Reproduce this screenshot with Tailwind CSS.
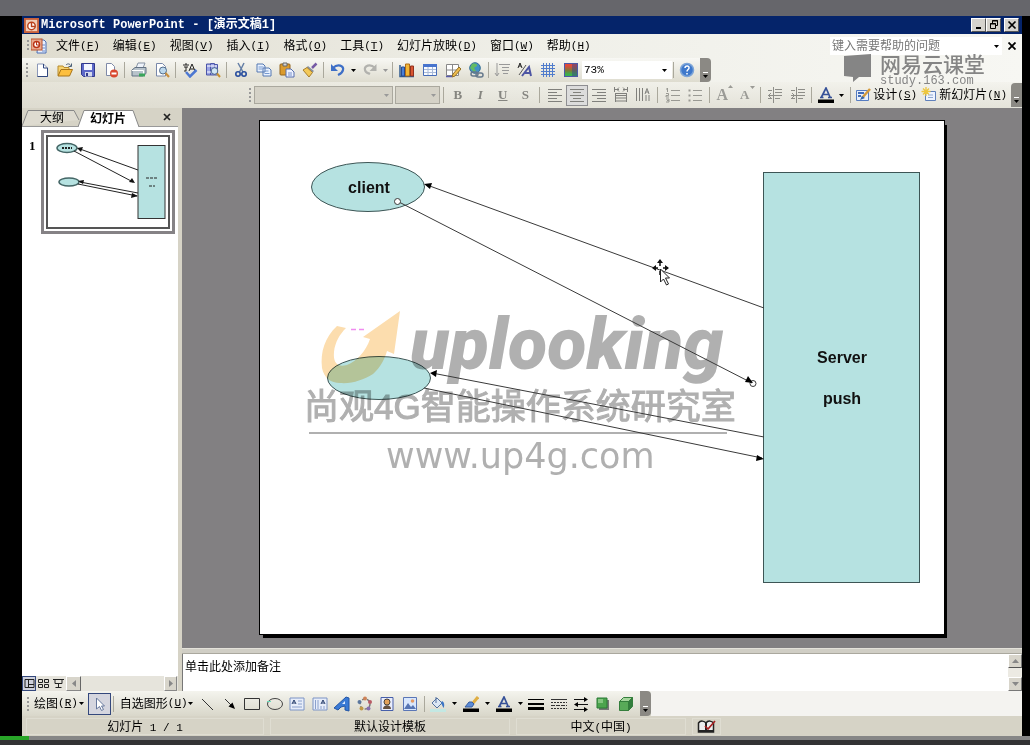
<!DOCTYPE html>
<html lang="zh-CN">
<head>
<meta charset="utf-8">
<title>Microsoft PowerPoint - [演示文稿1]</title>
<script src="https://cdn.jsdelivr.net/npm/@tailwindcss/browser@4"></script>
</head>
<body class="bg-black font-['Liberation_Sans','Noto_Sans_CJK_SC',sans-serif] text-xs text-black">
<div class="flex min-h-screen flex-col">
  <div class="h-4 bg-[#66666b]"></div>

  <main class="ml-[22px] mr-2 flex flex-1 flex-col bg-[#d6d3c6]">
    <!-- Title bar -->
    <header class="flex h-[18px] items-center bg-[#05246a] pl-[2px] pr-[3px] text-white">
      <svg class="size-[15px]" viewBox="0 0 16 16"><rect width="16" height="16" fill="#f0cdb8"/><rect x="1" y="1" width="14" height="14" fill="none" stroke="#c8623c" stroke-width="2"/><circle cx="8" cy="8.500" r="4" fill="#fff" stroke="#b9411c" stroke-width="1.500"/><path d="M8 5v4h4" fill="none" stroke="#b9411c" stroke-width="1.500"/></svg>
      <h1 class="ml-[2px] flex-1 whitespace-pre font-['Liberation_Mono','Noto_Sans_CJK_SC',monospace] text-[12px] font-bold leading-4">Microsoft PowerPoint - [演示文稿1]</h1>
      <div class="flex">
        <button aria-label="最小化" class="grid h-[14px] w-[15px] place-items-center border border-t-white border-l-white border-r-[#555] border-b-[#555] bg-[#d6d3ce]"><svg class="size-[10px]" viewBox="0 0 10 10"><path d="M2 8h5" stroke="#000" stroke-width="2"/></svg></button>
        <button aria-label="还原" class="grid h-[14px] w-[15px] place-items-center border border-t-white border-l-white border-r-[#555] border-b-[#555] bg-[#d6d3ce]"><svg class="size-[10px]" viewBox="0 0 10 10" fill="none" stroke="#000"><path d="M3.500 3V.500h5v5H6.500M3 1h6M1.500 3.500h5v5h-5zM1 4h6"/></svg></button>
        <button aria-label="关闭" class="ml-[3px] grid h-[14px] w-[15px] place-items-center border border-t-white border-l-white border-r-[#555] border-b-[#555] bg-[#d6d3ce]"><svg class="size-[10px]" viewBox="0 0 10 10"><path d="M1.500 1.500l7 7M8.500 1.500l-7 7" stroke="#000" stroke-width="1.700"/></svg></button>
      </div>
    </header>

    <div class="relative bg-linear-to-r from-[#dfdccf] via-[#efefe8] to-[#f7f7f3]">
      <!-- Menu bar -->
      <nav class="flex h-6 items-center pl-[5px] pr-1">
        <svg class="h-3 w-[2px]" viewBox="0 0 2 12"><path d="M1 0v12" stroke="#999" stroke-width="2" stroke-dasharray="2 2"/></svg>
        <svg class="ml-[2px] size-4" viewBox="0 0 16 16"><path d="M7 2h6l2 2v11H6z" fill="#e8f0ff" stroke="#4a6fb5"/><path d="M11 7h3M11 10h3M11 13h3" stroke="#6a8ccc"/><rect y="1" width="11" height="11" fill="#e9a88c" stroke="#b8502c"/><circle cx="5.500" cy="6.500" r="3" fill="#fff" stroke="#ba3415" stroke-width="1.500"/><path d="M5.500 4v3h3" stroke="#ba3415" fill="none"/></svg>
        <div class="ml-[9px] flex flex-1 gap-[13px] leading-5">
          <button class="flex items-center">文件<span class="font-['Liberation_Mono',monospace] text-[11px]">(<u>F</u>)</span></button>
          <button class="flex items-center">编辑<span class="font-['Liberation_Mono',monospace] text-[11px]">(<u>E</u>)</span></button>
          <button class="flex items-center">视图<span class="font-['Liberation_Mono',monospace] text-[11px]">(<u>V</u>)</span></button>
          <button class="flex items-center">插入<span class="font-['Liberation_Mono',monospace] text-[11px]">(<u>I</u>)</span></button>
          <button class="flex items-center">格式<span class="font-['Liberation_Mono',monospace] text-[11px]">(<u>O</u>)</span></button>
          <button class="flex items-center">工具<span class="font-['Liberation_Mono',monospace] text-[11px]">(<u>T</u>)</span></button>
          <button class="flex items-center">幻灯片放映<span class="font-['Liberation_Mono',monospace] text-[11px]">(<u>D</u>)</span></button>
          <button class="flex items-center">窗口<span class="font-['Liberation_Mono',monospace] text-[11px]">(<u>W</u>)</span></button>
          <button class="flex items-center">帮助<span class="font-['Liberation_Mono',monospace] text-[11px]">(<u>H</u>)</span></button>
        </div>
        <input type="text" aria-label="键入需要帮助的问题" placeholder="键入需要帮助的问题" class="h-[18px] w-[160px] bg-white pl-[2px] text-xs placeholder:text-[#777]">
        <button aria-label="帮助列表" class="grid h-[18px] w-3 place-items-center bg-white"><svg class="h-[3px] w-[5px]" viewBox="0 0 5 3"><path d="M0 0h5L2.500 3z"/></svg></button>
        <button aria-label="关闭文档" class="ml-1 grid w-3 place-items-center"><svg class="size-2" viewBox="0 0 8 8"><path d="M.500.500l7 7M7.500.500l-7 7" stroke="#000" stroke-width="1.800"/></svg></button>
      </nav>

      <!-- Standard toolbar -->
      <div class="flex h-6 items-center">
        <div class="flex h-6 items-center rounded-r bg-linear-to-b from-[#f8f8f4] to-[#dedccf] pl-1">
          <svg class="mr-[2px] h-[14px] w-[2px]" viewBox="0 0 2 14"><path d="M1 0v14" stroke="#999" stroke-width="2" stroke-dasharray="2 2"/></svg>
          <button aria-label="新建" class="grid h-[22px] w-[23px] place-items-center"><svg class="size-4" viewBox="0 0 16 16"><path d="M3.500 2h6l4 4v8.500h-10z" fill="#fff" stroke="#8a97b8"/><path d="M9.500 2v4h4v8.500h-10" fill="none" stroke="#30477e"/></svg></button>
          <button aria-label="打开" class="grid h-[22px] w-[23px] place-items-center"><svg class="size-4" viewBox="0 0 16 16"><path d="M1 13.500V4h5l1 1.500h5v2" fill="#f8d36e" stroke="#b58a2c"/><path d="M1 14l3-6.500h11.500L12.500 14z" fill="#fcbf3f" stroke="#a87419"/><path d="M9 3c2-2 4-1 5 1M14.500 1.500V4.500h-3" fill="none" stroke="#4b6078"/></svg></button>
          <button aria-label="保存" class="grid h-[22px] w-[23px] place-items-center"><svg class="size-4" viewBox="0 0 16 16"><path d="M1.500 1.500h13v13h-11l-2-2z" fill="#5d68c8" stroke="#31398c"/><path d="M4 2h8v6H4z" fill="#f2f5ff"/><path d="M5 10h7v4.500H5z" fill="#d4d9ec"/><path d="M6 11h2v3H6z" fill="#31398c"/></svg></button>
          <button aria-label="权限" class="grid h-[22px] w-[23px] place-items-center"><svg class="size-4" viewBox="0 0 16 16"><path d="M3.500 1.500h5l3 3v9h-8z" fill="#fff" stroke="#7f8aa8"/><circle cx="11" cy="11.500" r="4" fill="#d9482f"/><path d="M8.500 11.500h5" stroke="#fff" stroke-width="2"/></svg></button>
          <span class="mx-[2px] h-4 w-px bg-[#aaa89c]"></span>
          <button aria-label="打印" class="grid h-[22px] w-[23px] place-items-center"><svg class="size-4" viewBox="0 0 16 16"><path d="M5 6l2-5h7l-2 5" fill="#eef3fa" stroke="#8793a3"/><path d="M1 8l3-2.500h11v6L12 14H1z" fill="#b8c3cb" stroke="#637284"/><path d="M1 8.500h11.500V14" fill="none" stroke="#fff"/><path d="M8 11.500h6v3H8z" fill="#3aa55a"/></svg></button>
          <button aria-label="打印预览" class="grid h-[22px] w-[23px] place-items-center"><svg class="size-4" viewBox="0 0 16 16"><path d="M2.500 1.500h6l3 3v9.500h-9z" fill="#fff" stroke="#7888aa"/><circle cx="9" cy="8.500" r="3.500" fill="#bcd8ed" stroke="#526d8c"/><path d="M11.500 11l3.500 4" stroke="#c98f3c" stroke-width="2"/></svg></button>
          <span class="mx-[2px] h-4 w-px bg-[#aaa89c]"></span>
          <button aria-label="拼写检查" class="grid h-[22px] w-[23px] place-items-center"><svg class="size-4" viewBox="0 0 16 16"><path d="M1 3h6M4 1v2M2 5h4M4 5v4H2M7 9l3-7 3 7M8 7h4" stroke="#222" fill="none"/><path d="M4 10l4 4.500L14.500 8" fill="none" stroke="#4d78d2" stroke-width="2.500"/></svg></button>
          <button aria-label="信息检索" class="grid h-[22px] w-[23px] place-items-center"><svg class="size-4" viewBox="0 0 16 16"><path d="M1.500 2h4v11h-4zM5.500 1.500h4V13h-4zM9.500 2.500h3V13h-3z" fill="#9aa3e5" stroke="#4d56a8"/><path d="M2 4h10M2 10h10" stroke="#fff"/><circle cx="9.500" cy="9" r="3.300" fill="#d2e7f4" stroke="#516b92"/><path d="M12 11.500l3 3.500" stroke="#c9912f" stroke-width="2"/></svg></button>
          <span class="mx-[2px] h-4 w-px bg-[#aaa89c]"></span>
          <button aria-label="剪切" class="grid h-[22px] w-[23px] place-items-center"><svg class="size-4" viewBox="0 0 16 16"><path d="M5 1l5 9M11 1L6.500 10" stroke="#657fa6" stroke-width="1.500"/><circle cx="5" cy="12" r="2.200" fill="none" stroke="#274d9e" stroke-width="1.600"/><circle cx="11" cy="12" r="2.200" fill="none" stroke="#274d9e" stroke-width="1.600"/></svg></button>
          <button aria-label="复制" class="grid h-[22px] w-[23px] place-items-center"><svg class="size-4" viewBox="0 0 16 16"><path d="M1 2h6l2 2v6H1zM7 6h6l2 2v6H7z" fill="#e9f2ff" stroke="#5478b2"/><path d="M2.500 5h5M2.500 7h4M8.500 9h4M8.500 11.500h5" stroke="#789bd0"/></svg></button>
          <button aria-label="粘贴" class="grid h-[22px] w-[23px] place-items-center"><svg class="size-4" viewBox="0 0 16 16"><rect x="1" y="2" width="10" height="11" rx="1" fill="#db9b2d" stroke="#94651c"/><path d="M4 1h4v3H4z" fill="#d6d6d6" stroke="#676767"/><path d="M7 7h5l3 3v5H7z" fill="#edf2ff" stroke="#576fae"/><path d="M9 11h4M9 13h4" stroke="#7790ca"/></svg></button>
          <button aria-label="格式刷" class="grid h-[22px] w-[23px] place-items-center"><svg class="size-4" viewBox="0 0 16 16"><path d="M14.500 1.500L10 6" stroke="#765aa5" stroke-width="2.500"/><path d="M6 4l6 5-1.500 1.500-6-5z" fill="#8791a0"/><path d="M1 8l4-2.500 5.500 5L7 15z" fill="#f3c958" stroke="#a77e2c"/></svg></button>
          <span class="mx-[2px] h-4 w-px bg-[#aaa89c]"></span>
          <button aria-label="撤消" class="grid h-[22px] w-[23px] place-items-center"><svg class="size-4" viewBox="0 0 16 16"><path d="M3 6c5-5 11-2 10 2-.500 3-3 4-5 5" fill="none" stroke="#3e6fc7" stroke-width="2.200"/><path d="M1 2v7h7z" fill="#3e6fc7"/></svg></button>
          <button aria-label="撤消列表" class="grid w-[9px] place-items-center"><svg class="h-[3px] w-[5px]" viewBox="0 0 5 3"><path d="M0 0h5L2.500 3z"/></svg></button>
          <button aria-label="恢复" class="grid h-[22px] w-[23px] place-items-center"><svg class="size-4" viewBox="0 0 16 16"><path d="M13 6C8 1 2 4 3 8c.500 3 3 3 5 4" fill="none" stroke="#b2b2ae" stroke-width="2.200"/><path d="M14.500 2v7h-7z" fill="#b2b2ae"/></svg></button>
          <button aria-label="恢复列表" class="grid w-[9px] place-items-center"><svg class="h-[3px] w-[5px]" viewBox="0 0 5 3"><path d="M0 0h5L2.500 3z" fill="#999"/></svg></button>
          <span class="mx-[2px] h-4 w-px bg-[#aaa89c]"></span>
          <button aria-label="插入图表" class="grid h-[22px] w-[23px] place-items-center"><svg class="size-4" viewBox="0 0 16 16"><path d="M1 3v11.500h14" stroke="#315b8f" fill="none" stroke-width="1.500"/><path d="M2.500 5h3v9h-3z" fill="#4a80d5" stroke="#264c94"/><path d="M6.500 2h4v12h-4z" fill="#f2b736" stroke="#b06c16"/><path d="M11.500 4h3v10h-3z" fill="#d95532" stroke="#91321e"/></svg></button>
          <button aria-label="插入表格" class="grid h-[22px] w-[23px] place-items-center"><svg class="size-4" viewBox="0 0 16 16"><path d="M1.500 2.500h13v11h-13z" fill="#f8fbff" stroke="#476db8"/><path d="M1 3.500h14" stroke="#4774cd" stroke-width="3"/><path d="M2 7.500h12M2 10.500h12M6 5v8M10.500 5v8" stroke="#a8bad9"/></svg></button>
          <button aria-label="表格和边框" class="grid h-[22px] w-[23px] place-items-center"><svg class="size-4" viewBox="0 0 16 16"><path d="M1.500 2.500h12v11h-12zM2 8h11M7.500 3v10" fill="#fff" stroke="#888"/><path d="M14 5l-6 7-1 3 3-1 6-7z" fill="#eebc4f" stroke="#927025"/><path d="M1 14.500h6" stroke="#585ba8" stroke-width="1.500"/></svg></button>
          <button aria-label="插入超链接" class="grid h-[22px] w-[23px] place-items-center"><svg class="size-4" viewBox="0 0 16 16"><circle cx="7" cy="6" r="5.300" fill="#4190c7" stroke="#326d94"/><path d="M4 2c3-1 6 0 5 2L6 6l2 3-2 1-4-4z" fill="#62bb62"/><rect x="3" y="10" width="7" height="4" rx="2" fill="none" stroke="#66798c" stroke-width="1.500"/><rect x="8" y="11" width="7" height="4" rx="2" fill="none" stroke="#66798c" stroke-width="1.500"/></svg></button>
          <span class="mx-px h-4 w-px bg-[#aaa89c]"></span>
          <button aria-label="全部展开" class="grid h-[22px] w-[23px] place-items-center"><svg class="size-4" viewBox="0 0 16 16" stroke="#999" fill="none"><path d="M3 1v12M1 11l2 3 2-3M5 2.500h11M8 5.500h7M8 8.500h7M9 11.500h5"/></svg></button>
          <button aria-label="显示格式" class="grid h-[22px] w-[23px] place-items-center"><svg class="size-4" viewBox="0 0 16 16" fill="none"><path d="M1 6l2-5 2 5M2 4h2" stroke="#222"/><path d="M2 13L9 3" stroke="#555"/><path d="M5 14l7-9 2 9M8 11h5.500" stroke="#4d55a3" stroke-width="2"/></svg></button>
          <button aria-label="显示网格" class="grid h-[22px] w-[23px] place-items-center"><svg class="size-4" viewBox="0 0 16 16"><path d="M3.500 1v14M6.500 1v14M9.500 1v14M12.500 1v14M1 3.500h14M1 6.500h14M1 9.500h14M1 12.500h14" stroke="#507ccc"/></svg></button>
          <button aria-label="颜色/灰度" class="grid h-[22px] w-[23px] place-items-center"><svg class="size-4" viewBox="0 0 16 16"><defs><linearGradient id="hue" x2="0" y2="1"><stop offset=".15" stop-color="#e04a3a"/><stop offset=".55" stop-color="#7c7a3a"/><stop offset=".85" stop-color="#3cb04c"/></linearGradient></defs><path d="M1 1h14v14H1z" fill="#4d58a8"/><path d="M2 2h12v12H2z" fill="url(#hue)"/><path d="M9 2h5v12H9z" fill="#38468c" fill-opacity=".5"/></svg></button>
          <div class="relative flex h-[18px] w-[90px] items-center bg-white">
            <select aria-label="显示比例" class="h-[18px] w-full appearance-none bg-transparent pl-[2px] font-['Liberation_Mono',monospace] text-[11px]"><option>73%</option></select>
            <svg class="pointer-events-none absolute right-[5px] h-[3px] w-[5px]" viewBox="0 0 5 3"><path d="M0 0h5L2.500 3z"/></svg>
          </div>
          <span class="mx-px h-4 w-px bg-[#aaa89c]"></span>
          <button aria-label="帮助" class="grid h-[22px] w-[23px] place-items-center"><svg class="size-4" viewBox="0 0 16 16"><circle cx="8" cy="8" r="6.500" fill="#3e78cb" stroke="#7da5d8" stroke-width="1.500"/><path d="M6 6c0-3 4.500-2.500 4 0 0 1.500-2 1.500-2 3.500M8 11v1.500" fill="none" stroke="#fff" stroke-width="1.500"/></svg></button>
          <button aria-label="工具栏选项" class="ml-[2px] flex h-6 w-[11px] items-end justify-center rounded-r bg-[#8b8984] pb-1"><svg class="h-[6px] w-[5px]" viewBox="0 0 5 6"><path d="M0 .500h5" stroke="#fff"/><path d="M0 3h5L2.500 6z"/></svg></button>
        </div>
      </div>

      <!-- Formatting toolbar -->
      <div class="flex h-[26px] items-center justify-end bg-linear-to-b from-[#efeee6]/40 to-[#dddbd0]/70">
        <svg class="mr-[3px] h-[14px] w-[2px]" viewBox="0 0 2 14"><path d="M1 0v14" stroke="#999" stroke-width="2" stroke-dasharray="2 2"/></svg>
        <div class="relative flex h-[18px] w-[139px] items-center border border-[#aaa89e] bg-[#d5d2c7]"><select aria-label="字体" disabled class="h-4 w-full appearance-none"><option></option></select><svg class="absolute right-[3px] h-[3px] w-[5px]" viewBox="0 0 5 3"><path d="M0 0h5L2.500 3z" fill="#999"/></svg></div>
        <div class="relative ml-[2px] mr-[3px] flex h-[18px] w-[45px] items-center border border-[#aaa89e] bg-[#d5d2c7]"><select aria-label="字号" disabled class="h-4 w-full appearance-none"><option></option></select><svg class="absolute right-[3px] h-[3px] w-[5px]" viewBox="0 0 5 3"><path d="M0 0h5L2.500 3z" fill="#999"/></svg></div>
        <span class="mr-[2px] h-4 w-px bg-[#aaa89c]"></span>
        <div class="flex font-['Liberation_Serif',serif] text-[13px] text-[#858580]">
          <button aria-label="加粗" class="w-[23px] font-bold">B</button>
          <button aria-label="倾斜" class="w-[22px] font-bold italic">I</button>
          <button aria-label="下划线" class="w-[23px] font-bold underline">U</button>
          <button aria-label="阴影" class="w-[22px] font-bold">S</button>
        </div>
        <span class="mx-[3px] h-4 w-px bg-[#aaa89c]"></span>
        <div class="flex text-[#80807c]">
          <button aria-label="左对齐" class="grid h-[21px] w-[23px] place-items-center"><svg class="size-4" viewBox="0 0 16 16" stroke="currentColor"><path d="M1 2.500h14M1 5.500h9M1 8.500h14M1 11.500h9M1 14.500h14"/></svg></button>
          <button aria-label="居中" aria-pressed="true" class="grid h-[21px] w-[22px] place-items-center border border-[#8e8e91] bg-[#dcdcdc]"><svg class="size-4" viewBox="0 0 16 16" stroke="currentColor"><path d="M1 2.500h14M4 5.500h8M1 8.500h14M4 11.500h8M1 14.500h14"/></svg></button>
          <button aria-label="右对齐" class="grid h-[21px] w-[22px] place-items-center"><svg class="size-4" viewBox="0 0 16 16" stroke="currentColor"><path d="M1 2.500h14M6 5.500h9M1 8.500h14M6 11.500h9M1 14.500h14"/></svg></button>
          <button aria-label="分散对齐" class="grid h-[21px] w-[22px] place-items-center"><svg class="size-4" viewBox="0 0 16 16" stroke="currentColor" fill="none"><path d="M1.500 0v5M14.500 0v5M2 2.500h4M10 2.500h4M6 .500L4 2.500l2 2M10 .500l2 2-2 2M2 6.500h12M2 8.500h12M2 11h12M2 14h12M2.500 6v9M13.500 6v9"/></svg></button>
          <button aria-label="更改文字方向" class="grid h-[21px] w-[22px] place-items-center"><svg class="size-4" viewBox="0 0 16 16" stroke="currentColor" fill="none"><path d="M1.500 1v13M4.500 1v13M7.500 1v13M10 7l2-5.500L14 7M10.500 5h3M11 8v6M14 8v6"/></svg></button>
        </div>
        <span class="mx-[3px] h-4 w-px bg-[#aaa89c]"></span>
        <div class="flex text-[#999993]">
          <button aria-label="编号" class="grid h-[21px] w-[23px] place-items-center"><svg class="size-4" viewBox="0 0 16 16" stroke="currentColor" fill="none"><path d="M6 3.500h9M6 8.500h9M6 13.500h9M2.500 1v4M1 2h1.500M1 6.500h2.500v2H1v1.500h3M1 12h3v3H1M2 13.500h2"/></svg></button>
          <button aria-label="项目符号" class="grid h-[21px] w-[22px] place-items-center"><svg class="size-4" viewBox="0 0 16 16" stroke="currentColor"><path d="M6 3.500h9M6 8.500h9M6 13.500h9"/><path d="M1.500 3.500h2M1.500 8.500h2M1.500 13.500h2" stroke-width="2"/></svg></button>
        </div>
        <span class="mx-[3px] h-4 w-px bg-[#aaa89c]"></span>
        <div class="flex font-['Liberation_Serif',serif] font-bold text-[#9b9b96]">
          <button aria-label="增大字号" class="flex w-[23px] justify-center text-base leading-6">A<svg class="mt-[2px] h-[3px] w-[5px]" viewBox="0 0 5 3" fill="currentColor"><path d="M0 3h5L2.500 0z"/></svg></button>
          <button aria-label="减小字号" class="flex w-[22px] justify-center text-[13px] leading-6">A<svg class="mt-[3px] h-[3px] w-[5px]" viewBox="0 0 5 3" fill="currentColor"><path d="M0 0h5L2.500 3z"/></svg></button>
        </div>
        <span class="mx-[2px] h-4 w-px bg-[#aaa89c]"></span>
        <div class="flex text-[#8d8d88]">
          <button aria-label="减少缩进量" class="grid h-[21px] w-[23px] place-items-center"><svg class="size-4" viewBox="0 0 16 16" stroke="currentColor" fill="none"><path d="M1 3.500h4M8 2.500h7M8 5.500h7M1 8.500h14M8 11.500h5M1 11.500h4M6.500 0v16M4 6L1.500 8.500 4 11"/></svg></button>
          <button aria-label="增加缩进量" class="grid h-[21px] w-[23px] place-items-center"><svg class="size-4" viewBox="0 0 16 16" stroke="currentColor" fill="none"><path d="M1 3.500h4M8 2.500h7M8 5.500h7M1 8.500h14M8 11.500h5M1 11.500h4M6.500 0v16M2 6l2.500 2.500L2 11"/></svg></button>
        </div>
        <span class="mx-[2px] h-4 w-px bg-[#aaa89c]"></span>
        <button aria-label="字体颜色" class="grid h-[21px] w-[23px] place-items-center"><svg class="size-4" viewBox="0 0 16 16"><path d="M3.500 10L8 1l4 9M5.500 7.500h5.500M2 10.500h3.500M10 10.500h4" fill="none" stroke="#365198" stroke-width="1.700"/><path d="M0 12.500h16v3.500H0z"/></svg></button>
        <button aria-label="字体颜色列表" class="grid w-[9px] place-items-center"><svg class="h-[3px] w-[5px]" viewBox="0 0 5 3"><path d="M0 0h5L2.500 3z"/></svg></button>
        <span class="mx-[4px] h-4 w-px bg-[#aaa89c]"></span>
        <button class="flex items-center gap-[2px]"><svg class="size-4" viewBox="0 0 16 16"><path d="M1.500 3.500h12v10h-12z" fill="#e8f0fb" stroke="#567cc1"/><path d="M3 6h6M3 9h3" stroke="#456eb8" stroke-width="2"/><path d="M15 2L7 11" stroke="#d59a39" stroke-width="2.500"/><path d="M5 13l2-4 3 2z" fill="#3265aa"/></svg><span class="flex items-center">设计<span class="font-['Liberation_Mono',monospace] text-[11px]">(<u>S</u>)</span></span></button>
        <button class="ml-1 flex items-center gap-[2px]"><svg class="size-4" viewBox="0 0 16 16"><path d="M4.500 4.500h10v9h-10z" fill="#edf3ff" stroke="#6081bb"/><path d="M7 8h5M7 10.500h5" stroke="#90a9d1"/><path d="M5 0v9M.500 4.500h9M2 1.500l6 6M8 1.500l-6 6" stroke="#edc63f" stroke-width="1.300"/></svg><span class="flex items-center">新幻灯片<span class="font-['Liberation_Mono',monospace] text-[11px]">(<u>N</u>)</span></span></button>
        <button aria-label="工具栏选项" class="ml-1 flex h-6 w-[11px] items-end justify-center rounded-tl bg-[#8b8984] pb-1"><svg class="h-[6px] w-[5px]" viewBox="0 0 5 6"><path d="M0 .500h5" stroke="#fff"/><path d="M0 3h5L2.500 6z"/></svg></button>
      </div>

      <!-- Course site watermark -->
      <div class="absolute right-[37px] top-[18px] flex gap-2 text-[#858585]">
        <svg class="mt-[2px] h-[30px] w-7" viewBox="0 0 28 30"><path d="M0 2L27 0v23H15l-6 5v-5L0 22z" fill="#858585"/></svg>
        <div class="flex flex-col">
          <span class="text-[21px] font-medium leading-[26px]">网易云课堂</span>
          <span class="font-['Liberation_Mono',monospace] text-[12px] leading-[6px]">study.163.com</span>
        </div>
      </div>
    </div>

    <!-- Work area -->
    <div class="flex flex-1">
      <aside class="flex w-[156px] flex-col">
        <div class="flex h-[19px] items-end border-b border-[#999]">
          <button class="relative h-4 w-[56px] leading-[14px]"><svg class="absolute inset-0 h-4 w-[58px]" viewBox="0 0 58 16"><path d="M0 16L6 .500h46L57 10" fill="#dedbd0" stroke="#888"/></svg><span class="relative pl-1">大纲</span></button>
          <button class="relative -mb-px h-[17px] w-[60px] font-bold leading-[14px]"><svg class="absolute inset-0 h-[17px] w-[62px]" viewBox="0 0 62 17"><path d="M0 17L6 .500h49L61 17" fill="#fff" stroke="#888"/></svg><span class="relative">幻灯片</span></button>
          <button aria-label="关闭窗格" class="mb-[5px] ml-auto mr-[7px]"><svg class="size-2" viewBox="0 0 8 8"><path d="M1 1l6 6M7 1L1 7" stroke="#222" stroke-width="1.700"/></svg></button>
        </div>
        <div class="flex flex-1 items-start bg-white pl-[7px] pt-[3px]">
          <span class="mt-[6px] w-[12px] font-['Liberation_Serif',serif] text-[13px] font-bold leading-5">1</span>
          <button aria-label="幻灯片 1" class="border-[3px] border-[#858285] p-[2px]">
            <svg class="block h-[94px] w-[124px]" viewBox="45 135 124 94" fill="none" stroke="#222">
              <rect x="46" y="136" width="122" height="92" fill="#fff" stroke="#555" stroke-width="2"/>
              <ellipse cx="66" cy="148" rx="10" ry="4.500" fill="#b6e2e1" stroke="#466" stroke-width="1.500"/><ellipse cx="68" cy="182" rx="10" ry="4" fill="#b6e2e1" stroke="#466" stroke-width="1.500"/>
              <rect x="137" y="145.500" width="27" height="73" fill="#b6e2e1" stroke="#333"/>
              <path d="M137 170L79 149M73 151l59 31M137 193l-58-11M77 184l59 12"/>
              <path d="M76 148l6-1-2 5zM134 183l-6-1 3-4zM77 181l6-1-1 4zM137 196l-7 2 1-5z" fill="#111" stroke="none"/>
              <path d="M61 148h10" stroke-width="2" stroke-dasharray="2 1"/><path d="M145 178h11M148 186h6" stroke-dasharray="3 1"/>
            </svg>
          </button>
        </div>
        <div class="flex h-[15px] items-center bg-[#e6e4dc]">
          <button aria-label="普通视图" class="grid h-[15px] w-[14px] place-items-center border border-[#34487c] bg-[#cdd0dc]"><svg class="size-[11px]" viewBox="0 0 11 11"><path d="M1 1.500h9v8H1zM4.500 2v8M5 6.500h5" fill="none" stroke="#222"/></svg></button>
          <button aria-label="幻灯片浏览视图" class="grid h-[15px] w-[15px] place-items-center"><svg class="size-[11px]" viewBox="0 0 11 11"><path d="M.500 1.500h4v3h-4zM6.500 1.500h4v3h-4zM.500 6.500h4v3h-4zM6.500 6.500h4v3h-4z" fill="none" stroke="#222"/></svg></button>
          <button aria-label="放映" class="grid h-[15px] w-[15px] place-items-center"><svg class="size-[11px]" viewBox="0 0 11 11"><path d="M0 1.500h11M2 2v3.500h7V2M5.500 6v3M2.500 9.500h6" fill="none" stroke="#222"/></svg></button>
          <button aria-label="向左滚动" class="grid h-[15px] w-[15px] place-items-center border border-t-white border-l-white border-r-[#666] border-b-[#888] bg-[#d8d5cb]"><svg class="h-[7px] w-1" viewBox="0 0 4 7"><path d="M4 0v7L0 3.500z" fill="#888"/></svg></button>
          <button aria-label="向右滚动" class="ml-auto mr-px grid h-[15px] w-[13px] place-items-center border border-t-white border-l-white border-r-[#888] border-b-[#888] bg-[#d8d5cb]"><svg class="h-[7px] w-1" viewBox="0 0 4 7"><path d="M0 0v7l4-3.500z" fill="#888"/></svg></button>
        </div>
      </aside>

      <section class="ml-1 flex min-w-0 flex-1 flex-col">
        <div class="flex flex-1 flex-col bg-[#828082] px-[78px] pb-[14px] pt-[13px]">
          <svg class="w-full flex-1 bg-white shadow-[3px_4px_0_#000] outline-1 outline-black" viewBox="260 121 684 513" fill="none" font-family="Liberation Sans, sans-serif">
            <g stroke="#3d5555">
              <ellipse cx="368" cy="187" rx="56.500" ry="24.500" fill="#b6e2e1"/>
              <ellipse cx="379" cy="378" rx="51.500" ry="21.500" fill="#b6e2e1"/>
              <rect x="763.500" y="172.500" width="156" height="410" fill="#b6e2e1"/>
            </g>
            <!-- Training centre watermark -->
            <g class="mix-blend-multiply" fill="#b0b0b0">
              <path d="M337 326C325 337 320 352 322 368c2 10 9 15 18 15 12 1 23-3 33-9 8-7 12-16 14-23l7 3L400 311l-37 26 7 2c-4 12-13 22-23 26-10 3-14-3-13-13 1-10 6-18 12-24z" fill="#fcddae"/>
              <text x="410" y="369" font-family="Roboto, sans-serif" font-size="72" font-weight="900" font-style="italic">uplooking</text>
              <text x="304" y="419" font-family="Liberation Sans, Noto Sans CJK SC, sans-serif" font-size="35" stroke="#b0b0b0">尚观4G智能操作系统研究室</text>
              <path d="M309 432h418v2H309z"/>
              <text x="386" y="468" font-family="DejaVu Sans, sans-serif" font-size="35">www.up4g.com</text>
            </g>
            <path d="M351 329.500h5M359 329.500h5" stroke="#f08cf0" stroke-width="1.500"/>
            <g stroke="#3a3a3a">
              <path d="M764 308L427 185M397 201l355 182M764 437L432 373M424 388l338 70"/>
              <circle cx="397.500" cy="201.500" r="3" fill="#fff"/><circle cx="753" cy="383.500" r="3"/>
            </g>
            <path d="M424 184l8-1-2 6zM753 383l-8-1 3-6zM430 373l7-3-1 7zM764 459l-8 2 1-6z" fill="#000"/>
            <g fill="#111" font-size="16" font-weight="700" text-anchor="middle">
              <text x="369" y="193">client</text><text x="842" y="363">Server</text><text x="842" y="404">push</text>
            </g>
            <!-- Move pointer -->
            <path d="M660 260v6M653 268h5M663 268h5M660 271v4" stroke="#111" stroke-width="1.500"/>
            <path d="M660 259l3 4h-6zM652 268l4-3v6zM669 268l-4-3v6z" fill="#111"/>
            <path d="M660.500 269v13l3-3 3 6 2-1-3-6h4z" fill="#fff" stroke="#222"/>
          </svg>
        </div>
        <div class="h-[6px] border-b border-t border-t-[#e4e2da] border-b-[#aaa89e] bg-[#d0cec5]"></div>
        <div class="flex h-[37px] bg-white">
          <textarea aria-label="备注" class="min-w-0 flex-1 resize-none overflow-hidden border-l border-[#777] py-1 pl-[2px] text-xs leading-[18px] outline-none">单击此处添加备注</textarea>
          <div class="flex w-[14px] flex-col justify-between bg-[#eceae3]">
            <button aria-label="向上滚动" class="grid h-[14px] place-items-center border border-l-white border-t-white border-r-[#777] border-b-[#555] bg-[#d8d5cb]"><svg class="h-1 w-[7px]" viewBox="0 0 7 4"><path d="M0 4h7L3.500 0z" fill="#888"/></svg></button>
            <button aria-label="向下滚动" class="grid h-[14px] place-items-center border border-l-white border-t-white border-r-[#777] border-b-[#777] bg-[#d8d5cb]"><svg class="h-1 w-[7px]" viewBox="0 0 7 4"><path d="M0 0h7L3.500 4z" fill="#888"/></svg></button>
          </div>
        </div>
      </section>
    </div>

    <!-- Drawing toolbar -->
    <div class="flex h-[25px] bg-[#f4f3f0]">
      <div class="flex items-center bg-linear-to-b from-[#f4f4ee] to-[#d9d7ca] pl-[5px]">
        <svg class="mr-[5px] h-[14px] w-[2px]" viewBox="0 0 2 14"><path d="M1 0v14" stroke="#999" stroke-width="2" stroke-dasharray="2 2"/></svg>
        <button class="flex items-center">绘图<span class="font-['Liberation_Mono',monospace] text-[11px]">(<u>R</u>)</span><svg class="ml-px h-[3px] w-[5px]" viewBox="0 0 5 3"><path d="M0 0h5L2.500 3z"/></svg></button>
        <button aria-label="选择对象" aria-pressed="true" class="ml-1 grid h-[22px] w-[23px] place-items-center border border-[#34487c] bg-[#d5d6df]"><svg class="size-4" viewBox="0 0 16 16"><path d="M5.500 2v11l3-2.500 2 4 2-1-2-3.500h3z" fill="#fff" stroke="#66789d"/></svg></button>
        <span class="mx-[2px] h-4 w-px bg-[#aaa89c]"></span>
        <button class="ml-1 flex items-center">自选图形<span class="font-['Liberation_Mono',monospace] text-[11px]">(<u>U</u>)</span><svg class="mr-[3px] h-[3px] w-[5px]" viewBox="0 0 5 3"><path d="M0 0h5L2.500 3z"/></svg></button>
        <button aria-label="直线" class="grid h-[22px] w-[23px] place-items-center"><svg class="size-4" viewBox="0 0 16 16"><path d="M3 3l11 11" stroke="#333"/></svg></button>
        <button aria-label="箭头" class="grid h-[22px] w-[22px] place-items-center"><svg class="size-4" viewBox="0 0 16 16"><path d="M3 3l7 7" stroke="#333"/><path d="M13 13L6.500 10.500l4-4z"/></svg></button>
        <button aria-label="矩形" class="grid h-[22px] w-[23px] place-items-center"><svg class="size-4" viewBox="0 0 16 16"><path d="M.500 2.500h15v11H.500z" fill="none" stroke="#333"/></svg></button>
        <button aria-label="椭圆" class="grid h-[22px] w-[22px] place-items-center"><svg class="size-4" viewBox="0 0 16 16"><ellipse cx="8" cy="8" rx="7.500" ry="5.500" fill="none" stroke="#444"/><path d="M0 5.500h4" stroke="#64dfbc"/></svg></button>
        <button aria-label="文本框" class="grid h-[22px] w-[23px] place-items-center"><svg class="size-4" viewBox="0 0 16 16"><path d="M1 2h14v12H1z" fill="#e7edf9" stroke="#7c94c5"/><path d="M3 8l2-4 2 4M4 7h2" stroke="#223968" fill="none"/><path d="M9 5h4M9 8h4M3 11h10" stroke="#8ba0cc"/></svg></button>
        <button aria-label="竖排文本框" class="grid h-[22px] w-[22px] place-items-center"><svg class="size-4" viewBox="0 0 16 16"><path d="M1 2h14v12H1z" fill="#e7edf9" stroke="#7c94c5"/><path d="M9 8l2-4 2 4M10 7h2" stroke="#223968" fill="none"/><path d="M3.500 4v9M6 4v9M9 10v3M12 10v3" stroke="#8ba0cc"/></svg></button>
        <button aria-label="艺术字" class="grid h-[22px] w-[23px] place-items-center"><svg class="size-4" viewBox="0 0 16 16"><path d="M0 12L12 1l3 1v13l-4-1v-4l-4 1-3 3z" fill="#3a7ad5" stroke="#2456a5"/><path d="M8 8l3-3v3z" fill="#e2edff"/></svg></button>
        <button aria-label="组织结构图" class="grid h-[22px] w-[22px] place-items-center"><svg class="size-4" viewBox="0 0 16 16"><circle cx="8" cy="8" r="5" fill="none" stroke="#777" stroke-width="1.500" stroke-dasharray="3 2"/><circle cx="8" cy="2.500" r="2" fill="#cd8358"/><circle cx="13" cy="6" r="2" fill="#b95b66"/><circle cx="11.500" cy="12.500" r="2" fill="#8770b0"/><circle cx="4.500" cy="12.500" r="2" fill="#c09a49"/><circle cx="2.500" cy="6" r="2" fill="#5b779e"/></svg></button>
        <button aria-label="剪贴画" class="grid h-[22px] w-[23px] place-items-center"><svg class="size-4" viewBox="0 0 16 16"><path d="M2 1.500h12v13H2z" fill="#e9edfb" stroke="#465faa"/><circle cx="8" cy="6" r="3" fill="#e2a15b" stroke="#48423c"/><path d="M4 13c0-5 8-5 8 0z" fill="#645041"/></svg></button>
        <button aria-label="插入图片" class="grid h-[22px] w-[23px] place-items-center"><svg class="size-4" viewBox="0 0 16 16"><path d="M1.500 1.500h13v13h-13z" fill="#d8e7fd" stroke="#5a76b6"/><circle cx="10.500" cy="5" r="1.800" fill="#e49b65"/><path d="M2 13l4-6 3 4 2-2 3 4z" fill="#5675b3"/></svg></button>
        <span class="mx-[2px] h-4 w-px bg-[#aaa89c]"></span>
        <button aria-label="填充颜色" class="grid h-[22px] w-[23px] place-items-center"><svg class="size-4" viewBox="0 0 16 16"><path d="M2 7l5-5 5 5-5 5z" fill="#dce8f4" stroke="#53719e"/><path d="M6 1v6" stroke="#53719e"/><path d="M12 5c2 1 3 4 1.500 7L11 7z" fill="#3d75c4"/><path d="M0 13h16v3H0z" fill="#c3e8e3"/></svg></button>
        <button aria-label="填充颜色列表" class="grid w-[9px] place-items-center"><svg class="h-[3px] w-[5px]" viewBox="0 0 5 3"><path d="M0 0h5L2.500 3z"/></svg></button>
        <button aria-label="线条颜色" class="grid h-[22px] w-[24px] place-items-center"><svg class="size-4" viewBox="0 0 16 16"><path d="M15 1l-5 6" stroke="#dfae43" stroke-width="3"/><path d="M2 11l4-5h3l2 2-2 3z" fill="#5b8bd7" stroke="#365c9e"/><path d="M0 12.500h16v3.500H0z"/></svg></button>
        <button aria-label="线条颜色列表" class="grid w-[9px] place-items-center"><svg class="h-[3px] w-[5px]" viewBox="0 0 5 3"><path d="M0 0h5L2.500 3z"/></svg></button>
        <button aria-label="字体颜色" class="grid h-[22px] w-[24px] place-items-center"><svg class="size-4" viewBox="0 0 16 16"><path d="M3.500 10L8 1l4 9M5.500 7.500h5.500M2 10.500h3.500M10 10.500h4" fill="none" stroke="#365198" stroke-width="1.700"/><path d="M0 12.500h16v3.500H0z"/></svg></button>
        <button aria-label="字体颜色列表" class="grid w-[9px] place-items-center"><svg class="h-[3px] w-[5px]" viewBox="0 0 5 3"><path d="M0 0h5L2.500 3z"/></svg></button>
        <button aria-label="线型" class="grid h-[22px] w-[23px] place-items-center"><svg class="size-4" viewBox="0 0 16 16" stroke="#000"><path d="M0 3.500h16"/><path d="M0 8h16" stroke-width="2"/><path d="M0 12.500h16" stroke-width="3"/></svg></button>
        <button aria-label="虚线线型" class="grid h-[22px] w-[22px] place-items-center"><svg class="size-4" viewBox="0 0 16 16" stroke="#333"><path d="M0 3.500h16"/><path d="M0 6.500h16M0 12.500h16" stroke-dasharray="2 1"/><path d="M0 9.500h16" stroke-dasharray="4 1"/></svg></button>
        <button aria-label="箭头样式" class="grid h-[22px] w-[22px] place-items-center"><svg class="size-4" viewBox="0 0 16 16"><path d="M1 3.500h13M2 8.500h13M1 13.500h13" stroke="#111"/><path d="M11 1l4 2.500-4 2.500zM5 6L1 8.500 5 11zM11 11l4 2.500-4 2.500z"/></svg></button>
        <button aria-label="阴影样式" class="grid h-[22px] w-[23px] place-items-center"><svg class="size-4" viewBox="0 0 16 16"><path d="M4 4h10v10H4z" fill="#777"/><path d="M2 2h10v10H2z" fill="#4ca44e" stroke="#287b34"/><path d="M3 3h5v4H3z" fill="#84c681"/></svg></button>
        <button aria-label="三维效果样式" class="grid h-[22px] w-[23px] place-items-center"><svg class="size-4" viewBox="0 0 16 16" stroke="#347e3c"><path d="M1.500 5.500h9v9h-9z" fill="#58aa58"/><path d="M1.500 5.500l4-4h9l-4 4z" fill="#a5d69c"/><path d="M10.500 14.500l4-4v-9l-4 4z" fill="#337e3d"/></svg></button>
        <button aria-label="工具栏选项" class="ml-[2px] flex h-[25px] w-[11px] items-end justify-center rounded-r bg-[#8b8984] pb-1"><svg class="h-[6px] w-[5px]" viewBox="0 0 5 6"><path d="M0 .500h5" stroke="#fff"/><path d="M0 3h5L2.500 6z"/></svg></button>
      </div>
    </div>

    <!-- Status bar -->
    <footer class="flex h-5 items-center gap-[6px] pl-1 text-center leading-4">
      <div class="h-[17px] w-[238px] border border-[#dfddd2]">幻灯片<span class="whitespace-pre font-['Liberation_Mono',monospace] text-[11px]"> 1 / 1</span></div>
      <div class="h-[17px] w-[240px] border border-[#dfddd2]">默认设计模板</div>
      <div class="h-[17px] w-[170px] border border-[#dfddd2]">中文<span class="font-['Liberation_Mono',monospace] text-[11px]">(</span>中国<span class="font-['Liberation_Mono',monospace] text-[11px]">)</span></div>
      <div class="grid h-[17px] w-[29px] place-items-center border border-[#dfddd2]"><svg class="h-[13px] w-[19px]" viewBox="0 0 19 13"><path d="M1.500 3c2-3 6-2 7.500 0 2-3 6-2 7.500 0v9h-15z" fill="#eee" stroke="#222" stroke-width="1.500"/><path d="M9 3v8M2 11h14" stroke="#222" stroke-width="2"/><path d="M8 6l3 3 7-8" fill="none" stroke="#a72222" stroke-width="1.700"/></svg></div>
    </footer>
  </main>

  <!-- Video progress -->
  <div role="progressbar" aria-label="播放进度" aria-valuenow="3" class="h-1 bg-[#868686]"><div class="h-1 bg-[#28a428]" style="width:2.8%"></div></div>
  <div class="h-[5px] bg-[#323234]"></div>
</div>
</body>
</html>
